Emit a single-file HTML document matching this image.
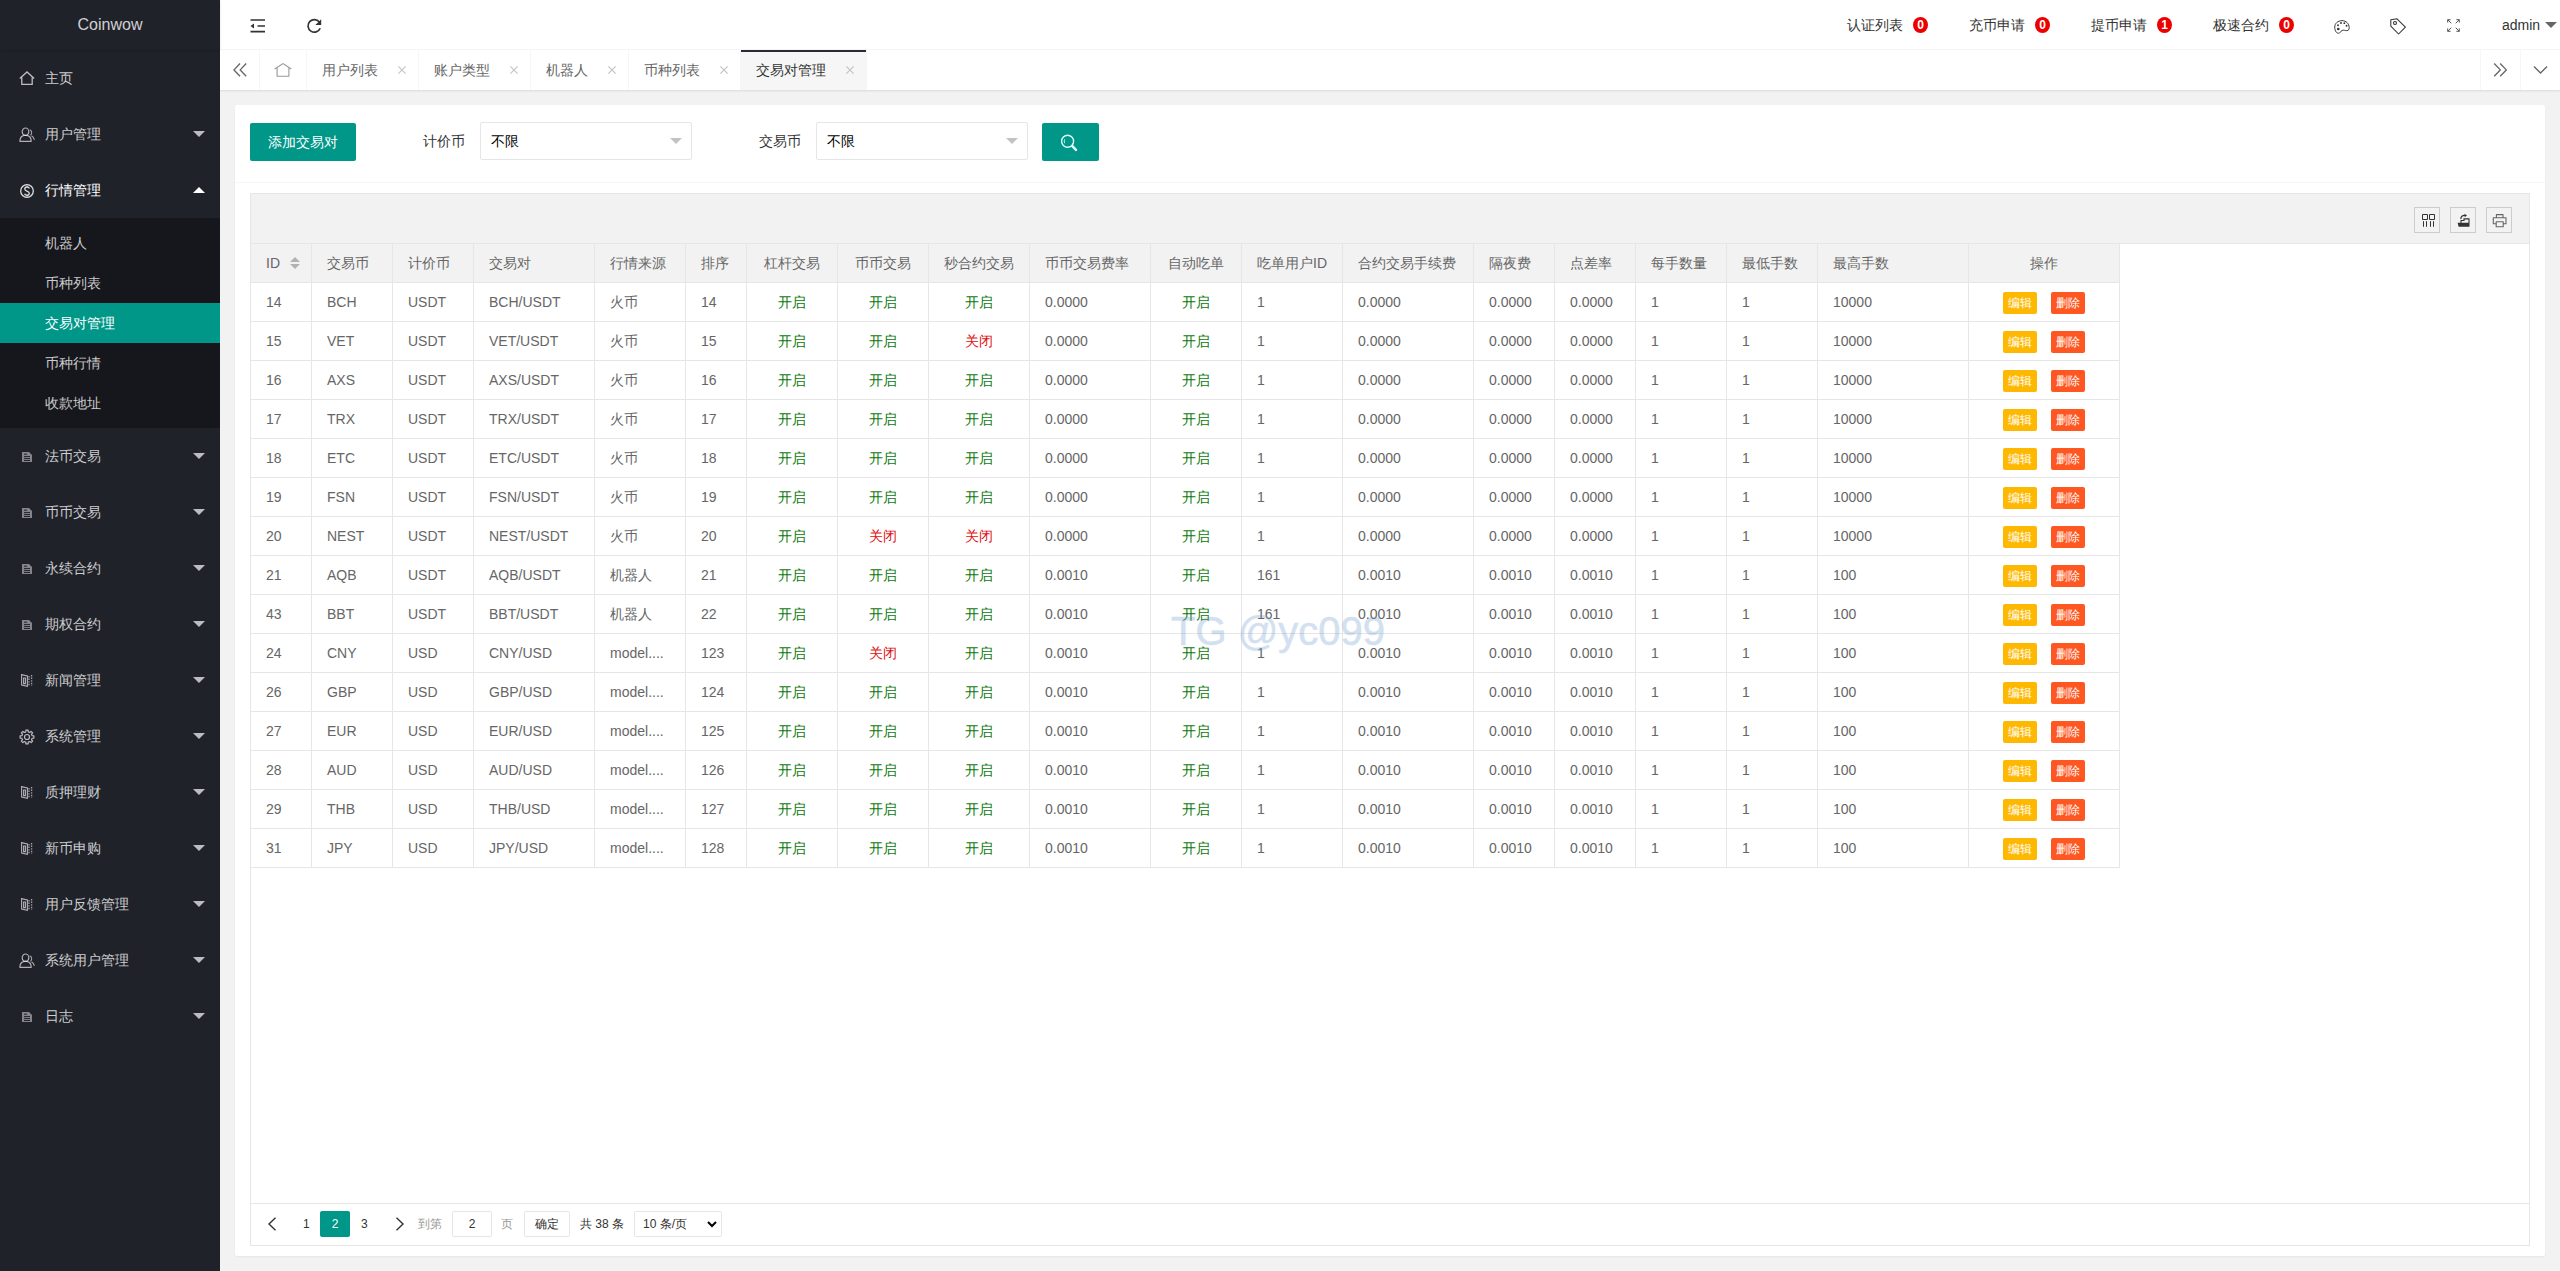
<!DOCTYPE html>
<html><head><meta charset="utf-8"><title>Coinwow</title>
<style>
*{box-sizing:border-box;margin:0;padding:0}
html,body{width:2560px;height:1271px;overflow:hidden}
body{font-family:"Liberation Sans",sans-serif;font-size:14px;color:#333;background:#f2f2f2;position:relative}
svg{position:absolute;overflow:visible}
/* sidebar */
.side{position:absolute;left:0;top:0;width:220px;height:1271px;background:#20222a}
.logo{position:absolute;left:0;top:0;width:220px;height:50px;line-height:50px;text-align:center;color:rgba(255,255,255,.8);font-size:16px;box-shadow:0 1px 2px 0 rgba(0,0,0,.15);background:#20222a;z-index:2}
.nav{position:absolute;left:0;top:50px;width:220px}
.ni{position:relative;height:56px;line-height:56px;padding-left:45px;color:rgba(255,255,255,.78)}
.ni.open{color:#fff}
.more{position:absolute;right:15px;top:25px;width:0;height:0;border:6px solid transparent;border-top-color:rgba(255,255,255,.7);border-bottom:none}
.more.up{top:25px;border-top:none;border-bottom:6px solid #fff}
.child{background:rgba(0,0,0,.3);padding:5px 0}
.ci{height:40px;line-height:40px;padding-left:45px;color:rgba(255,255,255,.78)}
.ci.this{background:#009688;color:#fff}
/* header */
.hdr{position:absolute;left:220px;top:0;right:0;height:50px;background:#fff;border-bottom:1px solid #f6f6f6}
.hitem{position:absolute;top:0;height:50px;line-height:50px;color:#333;white-space:nowrap}
.badge{position:absolute;top:17px;width:15px;height:16px;border-radius:50%;background:#ec0000;color:#fff;font-size:12px;font-weight:bold;line-height:16px;text-align:center}
/* tabs */
.tabs{position:absolute;left:220px;top:50px;right:0;height:40px;background:#fff;box-shadow:0 1px 2px 0 rgba(0,0,0,.1);z-index:3}
.tctl{position:absolute;top:0;width:40px;height:40px;border-left:1px solid #f6f6f6}
.tab{position:absolute;top:0;height:40px;line-height:40px;color:#666;border-right:1px solid #f6f6f6;padding-left:15px;white-space:nowrap}
.tab.this{background:#f6f6f6;color:#333}
.tab.this:after{content:'';position:absolute;left:0;top:0;width:100%;height:2px;background:#292b34}
/* card */
.card{position:absolute;left:235px;top:105px;width:2310px;height:1151px;background:#fff;border-radius:2px;box-shadow:0 1px 2px 0 rgba(0,0,0,.05)}
.chead{position:absolute;left:0;top:0;width:100%;height:78px;border-bottom:1px solid #f6f6f6}
.btn{position:absolute;height:38px;line-height:38px;background:#009688;color:#fff;border-radius:2px;text-align:center}
.lbl{position:absolute;top:131px;line-height:20px;color:#333}
.sel{position:absolute;top:122px;width:212px;height:38px;border:1px solid #e6e6e6;border-radius:2px;background:#fff;line-height:36px;padding-left:10px;color:#000}
.sel .edge{position:absolute;right:9px;top:15px;width:0;height:0;border:6px solid transparent;border-top-color:#c2c2c2;border-bottom:none}
/* table */
.tview{position:absolute;left:250px;top:193px;width:2280px;height:1053px;border:1px solid #e6e6e6;background:#fff}
.ttool{position:absolute;left:0;top:0;width:100%;height:50px;background:#f2f2f2;border-bottom:1px solid #e6e6e6}
.tsi{position:absolute;top:13px;width:26px;height:26px;border:1px solid #ccc}
table{border-collapse:separate;border-spacing:0;position:absolute;left:0;top:50px;table-layout:fixed;color:#666}
th,td{border-right:1px solid #e6e6e6;border-bottom:1px solid #e6e6e6;padding:0;font-weight:400;text-align:left}
th{background:#f2f2f2;height:39px;color:#666}
td{height:39px}
.cell{height:38px;line-height:38px;padding:0 15px;overflow:hidden;white-space:nowrap}
.c .cell{text-align:center}
.on{color:#0b7a0b}
.off{color:#e01010}
.bx{display:inline-block;height:22px;line-height:22px;padding:0 5px;font-size:12px;color:#fff;border-radius:2px;vertical-align:middle}
.bx+.bx{margin-left:14px}
.warm{background:#ffb800}
.danger{background:#ff5722}
.sort{position:relative;display:inline-block;width:10px;height:20px;vertical-align:middle;margin-left:10px;top:-1px}
.su{position:absolute;left:0;top:4px;border:5px solid transparent;border-bottom:5px solid #b2b2b2;border-top:none}
.sd{position:absolute;left:0;top:11px;border:5px solid transparent;border-top:5px solid #b2b2b2;border-bottom:none}
.tpage{position:absolute;left:0;top:1009px;width:100%;height:42px;border-top:1px solid #e6e6e6;font-size:12px;color:#333}
.pg{position:absolute;line-height:26px;top:7px;white-space:nowrap}
.wm{position:absolute;left:1171px;top:606px;font-size:40px;line-height:50px;color:rgb(108,155,208);-webkit-text-stroke:0.6px rgb(108,155,208);opacity:.3;white-space:nowrap;pointer-events:none;z-index:10}
</style></head><body>

<!-- SIDEBAR -->
<div class="side">
  <div class="logo">Coinwow</div>
  <div class="nav">
    <div class="ni">主页
      <svg style="left:19px;top:21px" width="16" height="14" viewBox="0 0 16 14"><path d="M0.8 7.6 L8 0.9 L15.2 7.6 M2.8 6 V13.3 H13.2 V6" fill="none" stroke="rgba(255,255,255,.7)" stroke-width="1.3"/></svg>
    </div>
    <div class="ni">用户管理<i class="more"></i>
      <svg style="left:19px;top:21px" width="16" height="16" viewBox="0 0 16 16"><ellipse cx="6.5" cy="4.7" rx="3.3" ry="3.7" fill="none" stroke="rgba(255,255,255,.65)" stroke-width="1.2"/><path d="M0.9 14.3 C0.9 10.6 3.2 8.8 5.3 8.4 H7.7 C9.8 8.8 12.2 10.6 12.2 14.3 Z" fill="none" stroke="rgba(255,255,255,.65)" stroke-width="1.2" stroke-linejoin="round"/><path d="M10.7 2.8 C13 3.4 13.3 7 11.5 8.2 M12.4 8.8 C14 9.6 15 11 15.4 12.8" fill="none" stroke="rgba(255,255,255,.6)" stroke-width="1.1"/></svg>
    </div>
    <div class="ni open">行情管理<i class="more up"></i>
      <svg style="left:20px;top:22px" width="15" height="15" viewBox="0 0 15 15"><circle cx="7" cy="7" r="6.3" fill="none" stroke="rgba(255,255,255,.85)" stroke-width="1.3"/><path d="M9.4 4.4 C9 3.4 8 3 7 3 C5.8 3 4.8 3.7 4.8 4.9 C4.8 6.4 6.2 6.8 7 7.1 C7.9 7.4 9.3 7.9 9.3 9.3 C9.3 10.5 8.2 11.2 7 11.2 C5.9 11.2 4.9 10.7 4.6 9.8 M7 1.8 V3 M7 11.2 V12.4" fill="none" stroke="rgba(255,255,255,.85)" stroke-width="1.3"/></svg>
    </div>
    <div class="child">
      <div class="ci">机器人</div>
      <div class="ci">币种列表</div>
      <div class="ci this">交易对管理</div>
      <div class="ci">币种行情</div>
      <div class="ci">收款地址</div>
    </div>
    <div class="ni">法币交易<i class="more"></i><svg style="left:22px;top:24px" width="10" height="10" viewBox="0 0 10 10"><path d="M0 0 H7 L10 3 V10 H0 Z" fill="rgba(255,255,255,.45)"/><path d="M2 2.2 H5 M2 4.6 H8 M2 6.6 H8 M2 8.5 H8" stroke="#20222a" stroke-width="1"/></svg></div><div class="ni">币币交易<i class="more"></i><svg style="left:22px;top:24px" width="10" height="10" viewBox="0 0 10 10"><path d="M0 0 H7 L10 3 V10 H0 Z" fill="rgba(255,255,255,.45)"/><path d="M2 2.2 H5 M2 4.6 H8 M2 6.6 H8 M2 8.5 H8" stroke="#20222a" stroke-width="1"/></svg></div><div class="ni">永续合约<i class="more"></i><svg style="left:22px;top:24px" width="10" height="10" viewBox="0 0 10 10"><path d="M0 0 H7 L10 3 V10 H0 Z" fill="rgba(255,255,255,.45)"/><path d="M2 2.2 H5 M2 4.6 H8 M2 6.6 H8 M2 8.5 H8" stroke="#20222a" stroke-width="1"/></svg></div><div class="ni">期权合约<i class="more"></i><svg style="left:22px;top:24px" width="10" height="10" viewBox="0 0 10 10"><path d="M0 0 H7 L10 3 V10 H0 Z" fill="rgba(255,255,255,.45)"/><path d="M2 2.2 H5 M2 4.6 H8 M2 6.6 H8 M2 8.5 H8" stroke="#20222a" stroke-width="1"/></svg></div><div class="ni">新闻管理<i class="more"></i><svg style="left:21px;top:22px" width="12" height="13" viewBox="0 0 12 13"><path d="M0.6 0.6 L6.4 2 V12.4 L0.6 11 Z M2.6 4 V9.6 H4.4 V4 Z" fill="none" stroke="rgba(255,255,255,.65)" stroke-width="1.1"/><path d="M8 2 V11.6 M10.6 1 V12" stroke="rgba(255,255,255,.6)" stroke-width="1.3" stroke-dasharray="1.4 1.2"/></svg></div><div class="ni">系统管理<i class="more"></i><svg style="left:19px;top:21px" width="16" height="16" viewBox="0 0 16 16"><path d="M6.90 1.09 L9.10 1.09 L9.24 2.85 L10.77 3.48 L12.11 2.34 L13.66 3.89 L12.52 5.23 L13.15 6.76 L14.91 6.90 L14.91 9.10 L13.15 9.24 L12.52 10.77 L13.66 12.11 L12.11 13.66 L10.77 12.52 L9.24 13.15 L9.10 14.91 L6.90 14.91 L6.76 13.15 L5.23 12.52 L3.89 13.66 L2.34 12.11 L3.48 10.77 L2.85 9.24 L1.09 9.10 L1.09 6.90 L2.85 6.76 L3.48 5.23 L2.34 3.89 L3.89 2.34 L5.23 3.48 L6.76 2.85 Z" fill="none" stroke="rgba(255,255,255,.7)" stroke-width="1.2" stroke-linejoin="round"/><circle cx="8" cy="8" r="2.5" fill="none" stroke="rgba(255,255,255,.7)" stroke-width="1.2"/></svg></div><div class="ni">质押理财<i class="more"></i><svg style="left:21px;top:22px" width="12" height="13" viewBox="0 0 12 13"><path d="M0.6 0.6 L6.4 2 V12.4 L0.6 11 Z M2.6 4 V9.6 H4.4 V4 Z" fill="none" stroke="rgba(255,255,255,.65)" stroke-width="1.1"/><path d="M8 2 V11.6 M10.6 1 V12" stroke="rgba(255,255,255,.6)" stroke-width="1.3" stroke-dasharray="1.4 1.2"/></svg></div><div class="ni">新币申购<i class="more"></i><svg style="left:21px;top:22px" width="12" height="13" viewBox="0 0 12 13"><path d="M0.6 0.6 L6.4 2 V12.4 L0.6 11 Z M2.6 4 V9.6 H4.4 V4 Z" fill="none" stroke="rgba(255,255,255,.65)" stroke-width="1.1"/><path d="M8 2 V11.6 M10.6 1 V12" stroke="rgba(255,255,255,.6)" stroke-width="1.3" stroke-dasharray="1.4 1.2"/></svg></div><div class="ni">用户反馈管理<i class="more"></i><svg style="left:21px;top:22px" width="12" height="13" viewBox="0 0 12 13"><path d="M0.6 0.6 L6.4 2 V12.4 L0.6 11 Z M2.6 4 V9.6 H4.4 V4 Z" fill="none" stroke="rgba(255,255,255,.65)" stroke-width="1.1"/><path d="M8 2 V11.6 M10.6 1 V12" stroke="rgba(255,255,255,.6)" stroke-width="1.3" stroke-dasharray="1.4 1.2"/></svg></div><div class="ni">系统用户管理<i class="more"></i><svg style="left:19px;top:21px" width="16" height="16" viewBox="0 0 16 16"><ellipse cx="6.5" cy="4.7" rx="3.3" ry="3.7" fill="none" stroke="rgba(255,255,255,.65)" stroke-width="1.2"/><path d="M0.9 14.3 C0.9 10.6 3.2 8.8 5.3 8.4 H7.7 C9.8 8.8 12.2 10.6 12.2 14.3 Z" fill="none" stroke="rgba(255,255,255,.65)" stroke-width="1.2" stroke-linejoin="round"/><path d="M10.7 2.8 C13 3.4 13.3 7 11.5 8.2 M12.4 8.8 C14 9.6 15 11 15.4 12.8" fill="none" stroke="rgba(255,255,255,.6)" stroke-width="1.1"/></svg></div><div class="ni">日志<i class="more"></i><svg style="left:22px;top:24px" width="10" height="10" viewBox="0 0 10 10"><path d="M0 0 H7 L10 3 V10 H0 Z" fill="rgba(255,255,255,.45)"/><path d="M2 2.2 H5 M2 4.6 H8 M2 6.6 H8 M2 8.5 H8" stroke="#20222a" stroke-width="1"/></svg></div>
  </div>
</div>

<!-- HEADER -->
<div class="hdr">
  <svg style="left:30px;top:19px" width="16" height="14" viewBox="0 0 16 14"><path d="M0.5 1 H15 M7.5 7 H15 M0.5 12.6 H15" stroke="#333" stroke-width="1.6"/><path d="M0.5 7 L4 4.6 V9.4 Z" fill="#333"/></svg>
  <svg style="left:87px;top:18px" width="16" height="16" viewBox="0 0 16 16"><path d="M13.2 10.2 A6.3 6.3 0 1 1 12.6 4.4" fill="none" stroke="#333" stroke-width="1.7"/><path d="M14.2 1.3 V7.1 H8.4 Z" fill="#333"/></svg>
  <div class="hitem" style="left:1627px">认证列表</div><div class="badge" style="left:1693px">0</div><div class="hitem" style="left:1749px">充币申请</div><div class="badge" style="left:1815px">0</div><div class="hitem" style="left:1871px">提币申请</div><div class="badge" style="left:1937px">1</div><div class="hitem" style="left:1993px">极速合约</div><div class="badge" style="left:2059px">0</div><svg style="left:2114px;top:19.5px" width="16" height="14" viewBox="0 0 17 15"><path d="M8.5 0.7 C4 0.7 0.7 3.8 0.7 7.6 C0.7 12 2.8 14.2 4.8 14.2 C6.6 14.2 6.8 12 8.6 11.2 C10.4 10.4 11.6 11.4 13.6 11.4 C15.6 11.4 16.2 10 16.2 8.2 C16.2 3.8 12.8 0.7 8.5 0.7 Z" fill="none" stroke="#333" stroke-width="1.05"/><circle cx="4.2" cy="5.6" r="1" fill="#333"/><circle cx="7.4" cy="3.2" r="1" fill="#333"/><circle cx="11" cy="3.4" r="1" fill="#333"/><circle cx="13.4" cy="6.2" r="1" fill="#333"/><circle cx="4.5" cy="9.6" r="1.4" fill="#333"/></svg><svg style="left:2170px;top:17.5px" width="17" height="17" viewBox="0 0 17 17"><path d="M0.8 1.8 L7 0.8 L15.4 9.2 L8.6 16 L0.8 8.2 Z" fill="none" stroke="#333" stroke-width="1.05" stroke-linejoin="round"/><circle cx="5" cy="5" r="1.5" fill="none" stroke="#333" stroke-width="1.1"/></svg><svg style="left:2227px;top:19px" width="13" height="13" viewBox="0 0 13 13"><path d="M0.7 0.7 L4.3 4.3 M0.7 0.7 V3.6 M0.7 0.7 H3.6 M12.3 0.7 L8.7 4.3 M12.3 0.7 V3.6 M12.3 0.7 H9.4 M0.7 12.3 L4.3 8.7 M0.7 12.3 V9.4 M0.7 12.3 H3.6 M12.3 12.3 L8.7 8.7 M12.3 12.3 V9.4 M12.3 12.3 H9.4" fill="none" stroke="#555" stroke-width="1"/></svg><div class="hitem" style="left:2282px">admin</div><i style="position:absolute;left:2325px;top:22px;width:0;height:0;border:6px solid transparent;border-top-color:#666;border-bottom:none"></i>
</div>

<!-- TABS -->
<div class="tabs">
  <div class="tctl" style="left:0;border-left:none;border-right:1px solid #f6f6f6">
    <svg style="left:13px;top:13px" width="14" height="14" viewBox="0 0 14 14"><path d="M7 0.5 L1 6.9 L7 13.3 M13.2 0.5 L7.2 6.9 L13.2 13.3" fill="none" stroke="#666" stroke-width="1.35"/></svg>
  </div>
  <div class="tab" style="left:40px;width:47px">
    <svg style="left:14px;top:13px" width="18" height="14" viewBox="0 0 18 14"><path d="M0.7 6 L9 0.6 L17.3 6 M3.1 4.4 V13.3 H14.9 V4.4" fill="none" stroke="#999" stroke-width="1.1"/></svg>
  </div>
  <div class="tab" style="left:87px;width:112px">用户列表<svg style="left:91px;top:16px" width="8" height="8" viewBox="0 0 8 8"><path d="M0.4 0.4 L7.6 7.6 M7.6 0.4 L0.4 7.6" stroke="#c2c2c2" stroke-width="1.1"/></svg></div><div class="tab" style="left:199px;width:112px">账户类型<svg style="left:91px;top:16px" width="8" height="8" viewBox="0 0 8 8"><path d="M0.4 0.4 L7.6 7.6 M7.6 0.4 L0.4 7.6" stroke="#c2c2c2" stroke-width="1.1"/></svg></div><div class="tab" style="left:311px;width:98px">机器人<svg style="left:77px;top:16px" width="8" height="8" viewBox="0 0 8 8"><path d="M0.4 0.4 L7.6 7.6 M7.6 0.4 L0.4 7.6" stroke="#c2c2c2" stroke-width="1.1"/></svg></div><div class="tab" style="left:409px;width:112px">币种列表<svg style="left:91px;top:16px" width="8" height="8" viewBox="0 0 8 8"><path d="M0.4 0.4 L7.6 7.6 M7.6 0.4 L0.4 7.6" stroke="#c2c2c2" stroke-width="1.1"/></svg></div><div class="tab this" style="left:521px;width:126px">交易对管理<svg style="left:105px;top:16px" width="8" height="8" viewBox="0 0 8 8"><path d="M0.4 0.4 L7.6 7.6 M7.6 0.4 L0.4 7.6" stroke="#c2c2c2" stroke-width="1.1"/></svg></div>
  <div class="tctl" style="right:40px">
    <svg style="left:13px;top:13px" width="14" height="14" viewBox="0 0 14 14"><path d="M0.2 0.5 L6.3 6.9 L0.2 13.3 M6.2 0.5 L12.3 6.9 L6.2 13.3" fill="none" stroke="#666" stroke-width="1.35"/></svg>
  </div>
  <div class="tctl" style="right:0">
    <svg style="left:13px;top:16px" width="14" height="8" viewBox="0 0 14 8"><path d="M0 0.5 L6.5 7 L13 0.5" fill="none" stroke="#666" stroke-width="1.35"/></svg>
  </div>
</div>

<!-- CARD -->
<div class="card"><div class="chead"></div></div>
<div class="btn" style="left:250px;top:123px;width:106px">添加交易对</div>
<div class="lbl" style="left:423px">计价币</div>
<div class="sel" style="left:480px">不限<i class="edge"></i></div>
<div class="lbl" style="left:759px">交易币</div>
<div class="sel" style="left:816px">不限<i class="edge"></i></div>
<div class="btn" style="left:1042px;top:123px;width:57px">
  <svg style="left:18px;top:11px" width="18" height="18" viewBox="0 0 18 18"><circle cx="7.6" cy="7.3" r="6" fill="none" stroke="#dff" stroke-width="1.4"/><path d="M4.7 5.4 C4.2 6.5 4.2 8 4.7 9.2" fill="none" stroke="#dff" stroke-width="1"/><path d="M12.4 12.2 L16 15.8" stroke="#dff" stroke-width="2.6" stroke-linecap="round"/></svg>
</div>

<div class="tview">
  <div class="ttool">
    <div class="tsi" style="left:2163px"><svg style="left:5px;top:5px" width="14" height="14" viewBox="0 0 14 14"><path d="M2.5 1.5 H7.5 V6.5 H2.5 Z M9.5 1.5 H14.5 V6.5 H9.5 Z M3.5 8.2 V13.8 M6.5 8.2 V13.8 M10.5 8.2 V13.8 M13.5 8.2 V13.8" fill="none" stroke="#333" stroke-width="1"/></svg></div>
    <div class="tsi" style="left:2199px"><svg style="left:5px;top:5px" width="14" height="14" viewBox="0 0 14 14"><path d="M1.6 9.7 H13.5 V13.7 H2.6 Z" fill="#333"/><path d="M5 10 V7.5 H8 V5.9 H13 V10" fill="none" stroke="#333" stroke-width="1.1"/><path d="M4.9 6 C4.6 3.5 6.5 2.2 9 2.4" fill="none" stroke="#333" stroke-width="1.2"/><path d="M8.6 0.8 L11 2.5 L8.6 4.2 Z" fill="#333"/></svg></div>
    <div class="tsi" style="left:2235px"><svg style="left:5px;top:5px" width="14" height="14" viewBox="0 0 14 14"><path d="M4.4 4.6 V1.6 H11 V4.6 M4.4 10.8 H1.3 V4.8 H14 V10.8 H11 M4.2 8.8 H11.2 V13.8 H4.2 Z" fill="none" stroke="#666" stroke-width="1.1" stroke-linejoin="round"/></svg></div>
  </div>
  <table>
    <thead><tr><th style="width:60px" class="l"><div class="cell" style="width:60px">ID<span class="sort"><i class="su"></i><i class="sd"></i></span></div></th><th style="width:80px" class="l"><div class="cell" style="width:80px">交易币</div></th><th style="width:80px" class="l"><div class="cell" style="width:80px">计价币</div></th><th style="width:120px" class="l"><div class="cell" style="width:120px">交易对</div></th><th style="width:90px" class="l"><div class="cell" style="width:90px">行情来源</div></th><th style="width:60px" class="l"><div class="cell" style="width:60px">排序</div></th><th style="width:90px" class="c"><div class="cell" style="width:90px">杠杆交易</div></th><th style="width:90px" class="c"><div class="cell" style="width:90px">币币交易</div></th><th style="width:100px" class="c"><div class="cell" style="width:100px">秒合约交易</div></th><th style="width:120px" class="l"><div class="cell" style="width:120px">币币交易费率</div></th><th style="width:90px" class="c"><div class="cell" style="width:90px">自动吃单</div></th><th style="width:100px" class="l"><div class="cell" style="width:100px">吃单用户ID</div></th><th style="width:130px" class="l"><div class="cell" style="width:130px">合约交易手续费</div></th><th style="width:80px" class="l"><div class="cell" style="width:80px">隔夜费</div></th><th style="width:80px" class="l"><div class="cell" style="width:80px">点差率</div></th><th style="width:90px" class="l"><div class="cell" style="width:90px">每手数量</div></th><th style="width:90px" class="l"><div class="cell" style="width:90px">最低手数</div></th><th style="width:150px" class="l"><div class="cell" style="width:150px">最高手数</div></th><th style="width:150px" class="c"><div class="cell" style="width:150px">操作</div></th></tr></thead>
    <tbody><tr><td class="l"><div class="cell" style="width:60px">14</div></td><td class="l"><div class="cell" style="width:80px">BCH</div></td><td class="l"><div class="cell" style="width:80px">USDT</div></td><td class="l"><div class="cell" style="width:120px">BCH/USDT</div></td><td class="l"><div class="cell" style="width:90px">火币</div></td><td class="l"><div class="cell" style="width:60px">14</div></td><td class="c"><div class="cell" style="width:90px"><span class="on">开启</span></div></td><td class="c"><div class="cell" style="width:90px"><span class="on">开启</span></div></td><td class="c"><div class="cell" style="width:100px"><span class="on">开启</span></div></td><td class="l"><div class="cell" style="width:120px">0.0000</div></td><td class="c"><div class="cell" style="width:90px"><span class="on">开启</span></div></td><td class="l"><div class="cell" style="width:100px">1</div></td><td class="l"><div class="cell" style="width:130px">0.0000</div></td><td class="l"><div class="cell" style="width:80px">0.0000</div></td><td class="l"><div class="cell" style="width:80px">0.0000</div></td><td class="l"><div class="cell" style="width:90px">1</div></td><td class="l"><div class="cell" style="width:90px">1</div></td><td class="l"><div class="cell" style="width:150px">10000</div></td><td class="c"><div class="cell" style="width:150px"><a class="bx warm">编辑</a><a class="bx danger">删除</a></div></td></tr><tr><td class="l"><div class="cell" style="width:60px">15</div></td><td class="l"><div class="cell" style="width:80px">VET</div></td><td class="l"><div class="cell" style="width:80px">USDT</div></td><td class="l"><div class="cell" style="width:120px">VET/USDT</div></td><td class="l"><div class="cell" style="width:90px">火币</div></td><td class="l"><div class="cell" style="width:60px">15</div></td><td class="c"><div class="cell" style="width:90px"><span class="on">开启</span></div></td><td class="c"><div class="cell" style="width:90px"><span class="on">开启</span></div></td><td class="c"><div class="cell" style="width:100px"><span class="off">关闭</span></div></td><td class="l"><div class="cell" style="width:120px">0.0000</div></td><td class="c"><div class="cell" style="width:90px"><span class="on">开启</span></div></td><td class="l"><div class="cell" style="width:100px">1</div></td><td class="l"><div class="cell" style="width:130px">0.0000</div></td><td class="l"><div class="cell" style="width:80px">0.0000</div></td><td class="l"><div class="cell" style="width:80px">0.0000</div></td><td class="l"><div class="cell" style="width:90px">1</div></td><td class="l"><div class="cell" style="width:90px">1</div></td><td class="l"><div class="cell" style="width:150px">10000</div></td><td class="c"><div class="cell" style="width:150px"><a class="bx warm">编辑</a><a class="bx danger">删除</a></div></td></tr><tr><td class="l"><div class="cell" style="width:60px">16</div></td><td class="l"><div class="cell" style="width:80px">AXS</div></td><td class="l"><div class="cell" style="width:80px">USDT</div></td><td class="l"><div class="cell" style="width:120px">AXS/USDT</div></td><td class="l"><div class="cell" style="width:90px">火币</div></td><td class="l"><div class="cell" style="width:60px">16</div></td><td class="c"><div class="cell" style="width:90px"><span class="on">开启</span></div></td><td class="c"><div class="cell" style="width:90px"><span class="on">开启</span></div></td><td class="c"><div class="cell" style="width:100px"><span class="on">开启</span></div></td><td class="l"><div class="cell" style="width:120px">0.0000</div></td><td class="c"><div class="cell" style="width:90px"><span class="on">开启</span></div></td><td class="l"><div class="cell" style="width:100px">1</div></td><td class="l"><div class="cell" style="width:130px">0.0000</div></td><td class="l"><div class="cell" style="width:80px">0.0000</div></td><td class="l"><div class="cell" style="width:80px">0.0000</div></td><td class="l"><div class="cell" style="width:90px">1</div></td><td class="l"><div class="cell" style="width:90px">1</div></td><td class="l"><div class="cell" style="width:150px">10000</div></td><td class="c"><div class="cell" style="width:150px"><a class="bx warm">编辑</a><a class="bx danger">删除</a></div></td></tr><tr><td class="l"><div class="cell" style="width:60px">17</div></td><td class="l"><div class="cell" style="width:80px">TRX</div></td><td class="l"><div class="cell" style="width:80px">USDT</div></td><td class="l"><div class="cell" style="width:120px">TRX/USDT</div></td><td class="l"><div class="cell" style="width:90px">火币</div></td><td class="l"><div class="cell" style="width:60px">17</div></td><td class="c"><div class="cell" style="width:90px"><span class="on">开启</span></div></td><td class="c"><div class="cell" style="width:90px"><span class="on">开启</span></div></td><td class="c"><div class="cell" style="width:100px"><span class="on">开启</span></div></td><td class="l"><div class="cell" style="width:120px">0.0000</div></td><td class="c"><div class="cell" style="width:90px"><span class="on">开启</span></div></td><td class="l"><div class="cell" style="width:100px">1</div></td><td class="l"><div class="cell" style="width:130px">0.0000</div></td><td class="l"><div class="cell" style="width:80px">0.0000</div></td><td class="l"><div class="cell" style="width:80px">0.0000</div></td><td class="l"><div class="cell" style="width:90px">1</div></td><td class="l"><div class="cell" style="width:90px">1</div></td><td class="l"><div class="cell" style="width:150px">10000</div></td><td class="c"><div class="cell" style="width:150px"><a class="bx warm">编辑</a><a class="bx danger">删除</a></div></td></tr><tr><td class="l"><div class="cell" style="width:60px">18</div></td><td class="l"><div class="cell" style="width:80px">ETC</div></td><td class="l"><div class="cell" style="width:80px">USDT</div></td><td class="l"><div class="cell" style="width:120px">ETC/USDT</div></td><td class="l"><div class="cell" style="width:90px">火币</div></td><td class="l"><div class="cell" style="width:60px">18</div></td><td class="c"><div class="cell" style="width:90px"><span class="on">开启</span></div></td><td class="c"><div class="cell" style="width:90px"><span class="on">开启</span></div></td><td class="c"><div class="cell" style="width:100px"><span class="on">开启</span></div></td><td class="l"><div class="cell" style="width:120px">0.0000</div></td><td class="c"><div class="cell" style="width:90px"><span class="on">开启</span></div></td><td class="l"><div class="cell" style="width:100px">1</div></td><td class="l"><div class="cell" style="width:130px">0.0000</div></td><td class="l"><div class="cell" style="width:80px">0.0000</div></td><td class="l"><div class="cell" style="width:80px">0.0000</div></td><td class="l"><div class="cell" style="width:90px">1</div></td><td class="l"><div class="cell" style="width:90px">1</div></td><td class="l"><div class="cell" style="width:150px">10000</div></td><td class="c"><div class="cell" style="width:150px"><a class="bx warm">编辑</a><a class="bx danger">删除</a></div></td></tr><tr><td class="l"><div class="cell" style="width:60px">19</div></td><td class="l"><div class="cell" style="width:80px">FSN</div></td><td class="l"><div class="cell" style="width:80px">USDT</div></td><td class="l"><div class="cell" style="width:120px">FSN/USDT</div></td><td class="l"><div class="cell" style="width:90px">火币</div></td><td class="l"><div class="cell" style="width:60px">19</div></td><td class="c"><div class="cell" style="width:90px"><span class="on">开启</span></div></td><td class="c"><div class="cell" style="width:90px"><span class="on">开启</span></div></td><td class="c"><div class="cell" style="width:100px"><span class="on">开启</span></div></td><td class="l"><div class="cell" style="width:120px">0.0000</div></td><td class="c"><div class="cell" style="width:90px"><span class="on">开启</span></div></td><td class="l"><div class="cell" style="width:100px">1</div></td><td class="l"><div class="cell" style="width:130px">0.0000</div></td><td class="l"><div class="cell" style="width:80px">0.0000</div></td><td class="l"><div class="cell" style="width:80px">0.0000</div></td><td class="l"><div class="cell" style="width:90px">1</div></td><td class="l"><div class="cell" style="width:90px">1</div></td><td class="l"><div class="cell" style="width:150px">10000</div></td><td class="c"><div class="cell" style="width:150px"><a class="bx warm">编辑</a><a class="bx danger">删除</a></div></td></tr><tr><td class="l"><div class="cell" style="width:60px">20</div></td><td class="l"><div class="cell" style="width:80px">NEST</div></td><td class="l"><div class="cell" style="width:80px">USDT</div></td><td class="l"><div class="cell" style="width:120px">NEST/USDT</div></td><td class="l"><div class="cell" style="width:90px">火币</div></td><td class="l"><div class="cell" style="width:60px">20</div></td><td class="c"><div class="cell" style="width:90px"><span class="on">开启</span></div></td><td class="c"><div class="cell" style="width:90px"><span class="off">关闭</span></div></td><td class="c"><div class="cell" style="width:100px"><span class="off">关闭</span></div></td><td class="l"><div class="cell" style="width:120px">0.0000</div></td><td class="c"><div class="cell" style="width:90px"><span class="on">开启</span></div></td><td class="l"><div class="cell" style="width:100px">1</div></td><td class="l"><div class="cell" style="width:130px">0.0000</div></td><td class="l"><div class="cell" style="width:80px">0.0000</div></td><td class="l"><div class="cell" style="width:80px">0.0000</div></td><td class="l"><div class="cell" style="width:90px">1</div></td><td class="l"><div class="cell" style="width:90px">1</div></td><td class="l"><div class="cell" style="width:150px">10000</div></td><td class="c"><div class="cell" style="width:150px"><a class="bx warm">编辑</a><a class="bx danger">删除</a></div></td></tr><tr><td class="l"><div class="cell" style="width:60px">21</div></td><td class="l"><div class="cell" style="width:80px">AQB</div></td><td class="l"><div class="cell" style="width:80px">USDT</div></td><td class="l"><div class="cell" style="width:120px">AQB/USDT</div></td><td class="l"><div class="cell" style="width:90px">机器人</div></td><td class="l"><div class="cell" style="width:60px">21</div></td><td class="c"><div class="cell" style="width:90px"><span class="on">开启</span></div></td><td class="c"><div class="cell" style="width:90px"><span class="on">开启</span></div></td><td class="c"><div class="cell" style="width:100px"><span class="on">开启</span></div></td><td class="l"><div class="cell" style="width:120px">0.0010</div></td><td class="c"><div class="cell" style="width:90px"><span class="on">开启</span></div></td><td class="l"><div class="cell" style="width:100px">161</div></td><td class="l"><div class="cell" style="width:130px">0.0010</div></td><td class="l"><div class="cell" style="width:80px">0.0010</div></td><td class="l"><div class="cell" style="width:80px">0.0010</div></td><td class="l"><div class="cell" style="width:90px">1</div></td><td class="l"><div class="cell" style="width:90px">1</div></td><td class="l"><div class="cell" style="width:150px">100</div></td><td class="c"><div class="cell" style="width:150px"><a class="bx warm">编辑</a><a class="bx danger">删除</a></div></td></tr><tr><td class="l"><div class="cell" style="width:60px">43</div></td><td class="l"><div class="cell" style="width:80px">BBT</div></td><td class="l"><div class="cell" style="width:80px">USDT</div></td><td class="l"><div class="cell" style="width:120px">BBT/USDT</div></td><td class="l"><div class="cell" style="width:90px">机器人</div></td><td class="l"><div class="cell" style="width:60px">22</div></td><td class="c"><div class="cell" style="width:90px"><span class="on">开启</span></div></td><td class="c"><div class="cell" style="width:90px"><span class="on">开启</span></div></td><td class="c"><div class="cell" style="width:100px"><span class="on">开启</span></div></td><td class="l"><div class="cell" style="width:120px">0.0010</div></td><td class="c"><div class="cell" style="width:90px"><span class="on">开启</span></div></td><td class="l"><div class="cell" style="width:100px">161</div></td><td class="l"><div class="cell" style="width:130px">0.0010</div></td><td class="l"><div class="cell" style="width:80px">0.0010</div></td><td class="l"><div class="cell" style="width:80px">0.0010</div></td><td class="l"><div class="cell" style="width:90px">1</div></td><td class="l"><div class="cell" style="width:90px">1</div></td><td class="l"><div class="cell" style="width:150px">100</div></td><td class="c"><div class="cell" style="width:150px"><a class="bx warm">编辑</a><a class="bx danger">删除</a></div></td></tr><tr><td class="l"><div class="cell" style="width:60px">24</div></td><td class="l"><div class="cell" style="width:80px">CNY</div></td><td class="l"><div class="cell" style="width:80px">USD</div></td><td class="l"><div class="cell" style="width:120px">CNY/USD</div></td><td class="l"><div class="cell" style="width:90px">model....</div></td><td class="l"><div class="cell" style="width:60px">123</div></td><td class="c"><div class="cell" style="width:90px"><span class="on">开启</span></div></td><td class="c"><div class="cell" style="width:90px"><span class="off">关闭</span></div></td><td class="c"><div class="cell" style="width:100px"><span class="on">开启</span></div></td><td class="l"><div class="cell" style="width:120px">0.0010</div></td><td class="c"><div class="cell" style="width:90px"><span class="on">开启</span></div></td><td class="l"><div class="cell" style="width:100px">1</div></td><td class="l"><div class="cell" style="width:130px">0.0010</div></td><td class="l"><div class="cell" style="width:80px">0.0010</div></td><td class="l"><div class="cell" style="width:80px">0.0010</div></td><td class="l"><div class="cell" style="width:90px">1</div></td><td class="l"><div class="cell" style="width:90px">1</div></td><td class="l"><div class="cell" style="width:150px">100</div></td><td class="c"><div class="cell" style="width:150px"><a class="bx warm">编辑</a><a class="bx danger">删除</a></div></td></tr><tr><td class="l"><div class="cell" style="width:60px">26</div></td><td class="l"><div class="cell" style="width:80px">GBP</div></td><td class="l"><div class="cell" style="width:80px">USD</div></td><td class="l"><div class="cell" style="width:120px">GBP/USD</div></td><td class="l"><div class="cell" style="width:90px">model....</div></td><td class="l"><div class="cell" style="width:60px">124</div></td><td class="c"><div class="cell" style="width:90px"><span class="on">开启</span></div></td><td class="c"><div class="cell" style="width:90px"><span class="on">开启</span></div></td><td class="c"><div class="cell" style="width:100px"><span class="on">开启</span></div></td><td class="l"><div class="cell" style="width:120px">0.0010</div></td><td class="c"><div class="cell" style="width:90px"><span class="on">开启</span></div></td><td class="l"><div class="cell" style="width:100px">1</div></td><td class="l"><div class="cell" style="width:130px">0.0010</div></td><td class="l"><div class="cell" style="width:80px">0.0010</div></td><td class="l"><div class="cell" style="width:80px">0.0010</div></td><td class="l"><div class="cell" style="width:90px">1</div></td><td class="l"><div class="cell" style="width:90px">1</div></td><td class="l"><div class="cell" style="width:150px">100</div></td><td class="c"><div class="cell" style="width:150px"><a class="bx warm">编辑</a><a class="bx danger">删除</a></div></td></tr><tr><td class="l"><div class="cell" style="width:60px">27</div></td><td class="l"><div class="cell" style="width:80px">EUR</div></td><td class="l"><div class="cell" style="width:80px">USD</div></td><td class="l"><div class="cell" style="width:120px">EUR/USD</div></td><td class="l"><div class="cell" style="width:90px">model....</div></td><td class="l"><div class="cell" style="width:60px">125</div></td><td class="c"><div class="cell" style="width:90px"><span class="on">开启</span></div></td><td class="c"><div class="cell" style="width:90px"><span class="on">开启</span></div></td><td class="c"><div class="cell" style="width:100px"><span class="on">开启</span></div></td><td class="l"><div class="cell" style="width:120px">0.0010</div></td><td class="c"><div class="cell" style="width:90px"><span class="on">开启</span></div></td><td class="l"><div class="cell" style="width:100px">1</div></td><td class="l"><div class="cell" style="width:130px">0.0010</div></td><td class="l"><div class="cell" style="width:80px">0.0010</div></td><td class="l"><div class="cell" style="width:80px">0.0010</div></td><td class="l"><div class="cell" style="width:90px">1</div></td><td class="l"><div class="cell" style="width:90px">1</div></td><td class="l"><div class="cell" style="width:150px">100</div></td><td class="c"><div class="cell" style="width:150px"><a class="bx warm">编辑</a><a class="bx danger">删除</a></div></td></tr><tr><td class="l"><div class="cell" style="width:60px">28</div></td><td class="l"><div class="cell" style="width:80px">AUD</div></td><td class="l"><div class="cell" style="width:80px">USD</div></td><td class="l"><div class="cell" style="width:120px">AUD/USD</div></td><td class="l"><div class="cell" style="width:90px">model....</div></td><td class="l"><div class="cell" style="width:60px">126</div></td><td class="c"><div class="cell" style="width:90px"><span class="on">开启</span></div></td><td class="c"><div class="cell" style="width:90px"><span class="on">开启</span></div></td><td class="c"><div class="cell" style="width:100px"><span class="on">开启</span></div></td><td class="l"><div class="cell" style="width:120px">0.0010</div></td><td class="c"><div class="cell" style="width:90px"><span class="on">开启</span></div></td><td class="l"><div class="cell" style="width:100px">1</div></td><td class="l"><div class="cell" style="width:130px">0.0010</div></td><td class="l"><div class="cell" style="width:80px">0.0010</div></td><td class="l"><div class="cell" style="width:80px">0.0010</div></td><td class="l"><div class="cell" style="width:90px">1</div></td><td class="l"><div class="cell" style="width:90px">1</div></td><td class="l"><div class="cell" style="width:150px">100</div></td><td class="c"><div class="cell" style="width:150px"><a class="bx warm">编辑</a><a class="bx danger">删除</a></div></td></tr><tr><td class="l"><div class="cell" style="width:60px">29</div></td><td class="l"><div class="cell" style="width:80px">THB</div></td><td class="l"><div class="cell" style="width:80px">USD</div></td><td class="l"><div class="cell" style="width:120px">THB/USD</div></td><td class="l"><div class="cell" style="width:90px">model....</div></td><td class="l"><div class="cell" style="width:60px">127</div></td><td class="c"><div class="cell" style="width:90px"><span class="on">开启</span></div></td><td class="c"><div class="cell" style="width:90px"><span class="on">开启</span></div></td><td class="c"><div class="cell" style="width:100px"><span class="on">开启</span></div></td><td class="l"><div class="cell" style="width:120px">0.0010</div></td><td class="c"><div class="cell" style="width:90px"><span class="on">开启</span></div></td><td class="l"><div class="cell" style="width:100px">1</div></td><td class="l"><div class="cell" style="width:130px">0.0010</div></td><td class="l"><div class="cell" style="width:80px">0.0010</div></td><td class="l"><div class="cell" style="width:80px">0.0010</div></td><td class="l"><div class="cell" style="width:90px">1</div></td><td class="l"><div class="cell" style="width:90px">1</div></td><td class="l"><div class="cell" style="width:150px">100</div></td><td class="c"><div class="cell" style="width:150px"><a class="bx warm">编辑</a><a class="bx danger">删除</a></div></td></tr><tr><td class="l"><div class="cell" style="width:60px">31</div></td><td class="l"><div class="cell" style="width:80px">JPY</div></td><td class="l"><div class="cell" style="width:80px">USD</div></td><td class="l"><div class="cell" style="width:120px">JPY/USD</div></td><td class="l"><div class="cell" style="width:90px">model....</div></td><td class="l"><div class="cell" style="width:60px">128</div></td><td class="c"><div class="cell" style="width:90px"><span class="on">开启</span></div></td><td class="c"><div class="cell" style="width:90px"><span class="on">开启</span></div></td><td class="c"><div class="cell" style="width:100px"><span class="on">开启</span></div></td><td class="l"><div class="cell" style="width:120px">0.0010</div></td><td class="c"><div class="cell" style="width:90px"><span class="on">开启</span></div></td><td class="l"><div class="cell" style="width:100px">1</div></td><td class="l"><div class="cell" style="width:130px">0.0010</div></td><td class="l"><div class="cell" style="width:80px">0.0010</div></td><td class="l"><div class="cell" style="width:80px">0.0010</div></td><td class="l"><div class="cell" style="width:90px">1</div></td><td class="l"><div class="cell" style="width:90px">1</div></td><td class="l"><div class="cell" style="width:150px">100</div></td><td class="c"><div class="cell" style="width:150px"><a class="bx warm">编辑</a><a class="bx danger">删除</a></div></td></tr></tbody>
  </table>
  <div class="tpage">
    
<svg style="left:16px;top:13px" width="10" height="14" viewBox="0 0 10 14"><path d="M8.5 0.8 L2 7 L8.5 13.2" fill="none" stroke="#333" stroke-width="1.4"/></svg>
<div class="pg" style="left:52px">1</div>
<div class="pg" style="left:69px;width:30px;height:26px;background:#009688;color:#fff;text-align:center;border-radius:2px">2</div>
<div class="pg" style="left:110px">3</div>
<svg style="left:144px;top:13px" width="10" height="14" viewBox="0 0 10 14"><path d="M1.5 0.8 L8 7 L1.5 13.2" fill="none" stroke="#333" stroke-width="1.4"/></svg>
<div class="pg" style="left:167px;color:#999">到第</div>
<div class="pg" style="left:201px;width:40px;height:26px;border:1px solid #e6e6e6;border-radius:2px;text-align:center;line-height:24px;color:#333">2</div>
<div class="pg" style="left:250px;color:#999">页</div>
<div class="pg" style="left:273px;width:46px;height:26px;border:1px solid #e6e6e6;border-radius:2px;text-align:center;line-height:24px;color:#333">确定</div>
<div class="pg" style="left:329px">共 38 条</div>
<div class="pg" style="left:383px;width:88px;height:26px;border:1px solid #e6e6e6;border-radius:2px;line-height:24px;padding-left:8px;color:#333">10 条/页
<svg style="left:72px;top:9px" width="10" height="7" viewBox="0 0 10 7"><path d="M1 1 L5 5 L9 1" fill="none" stroke="#000" stroke-width="2"/></svg></div>

  </div>
</div>

<div class="wm">TG @yc099</div>
</body></html>
